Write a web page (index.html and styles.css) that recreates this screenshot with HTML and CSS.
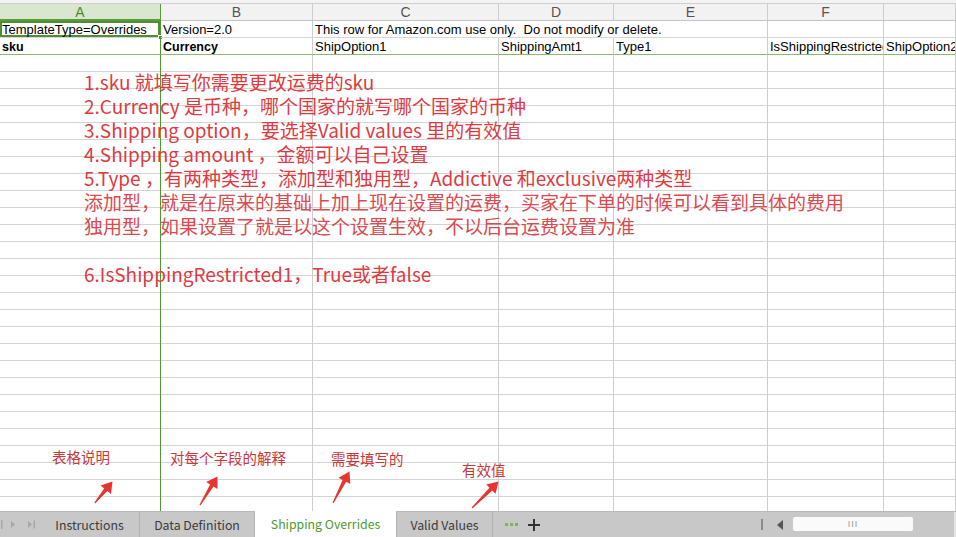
FILE: index.html
```html
<!DOCTYPE html>
<html lang="zh-CN">
<head>
<meta charset="utf-8">
<title>Shipping Overrides</title>
<link rel="stylesheet" href="styles.css">
</head>
<body>
<div class="app">
  <div class="topstrip"></div>
  <div class="sheet">
    <div class="grid">
      <div class="hd hd-sel">A</div>
      <div class="hd">B</div>
      <div class="hd">C</div>
      <div class="hd">D</div>
      <div class="hd">E</div>
      <div class="hd">F</div>
      <div class="hd"></div>

      <div class="c colA selcell">TemplateType=Overrides<span class="handle"></span></div>
      <div class="c">Version=2.0</div>
      <div class="c nob">This row for Amazon.com use only.&nbsp; Do not modify or delete.</div>
      <div class="c nob"></div>
      <div class="c"></div>
      <div class="c"></div>
      <div class="c"></div>

      <div class="c colA r2 b">sku</div>
      <div class="c r2 b">Currency</div>
      <div class="c r2">ShipOption1</div>
      <div class="c r2">ShippingAmt1</div>
      <div class="c r2">Type1</div>
      <div class="c r2 clip">IsShippingRestricted1</div>
      <div class="c r2 clip">ShipOption2</div>

      <div class="rest colA"></div>
      <div class="rest"></div>
      <div class="rest"></div>
      <div class="rest"></div>
      <div class="rest"></div>
      <div class="rest"></div>
      <div class="rest"></div>
    </div>
  </div>

  <div class="notes">
    <div>1.sku 就填写你需要更改运费的sku</div>
    <div>2.Currency 是币种，哪个国家的就写哪个国家的币种</div>
    <div>3.Shipping option，要选择Valid values 里的有效值</div>
    <div>4.Shipping amount ，金额可以自己设置</div>
    <div>5.Type ，有两种类型，添加型和独用型，Addictive 和exclusive两种类型</div>
    <div class="thin">添加型，就是在原来的基础上加上现在设置的运费，买家在下单的时候可以看到具体的费用</div>
    <div class="thin">独用型，如果设置了就是以这个设置生效，不以后台运费设置为准</div>
    <div class="blank"></div>
    <div>6.IsShippingRestricted1，True或者false</div>
  </div>

  <div class="label l1">表格说明</div>
  <div class="label l2">对每个字段的解释</div>
  <div class="label l3">需要填写的</div>
  <div class="label l4">有效值</div>

  <svg class="arrows" width="956" height="537" viewBox="0 0 956 537">
    <g fill="#e8342e">
      <polygon points="95.2,503.5 107.3,491.0 111.0,494.0 112.5,481.5 100.6,485.5 104.2,488.5 94.4,502.6"/>
      <polygon points="200.4,505.4 213.5,486.6 217.5,489.0 217.5,476.5 206.2,482.0 210.1,484.5 199.5,504.7"/>
      <polygon points="333.5,503.3 346.2,481.8 350.3,484.0 349.5,471.5 338.6,477.8 342.6,480.0 332.5,502.7"/>
      <polygon points="472.4,508.4 492.3,490.5 495.6,493.8 498.5,481.5 486.2,484.4 489.5,487.7 471.6,507.6"/>
    </g>
  </svg>

  <div class="tabbar">
    <div class="nav">
      <svg width="40" height="26" viewBox="0 0 40 26">
        <g fill="#a8a8a8">
          <rect x="1" y="8" width="1.5" height="9"/>
          <polygon points="11,9 15,12.5 11,16"/>
          <polygon points="28,9 32,12.5 28,16"/>
          <rect x="33.5" y="8.5" width="1.5" height="8"/>
        </g>
      </svg>
    </div>
    <div class="tab w1">Instructions</div>
    <div class="tab w2">Data Definition</div>
    <div class="tab w3 active">Shipping Overrides</div>
    <div class="tab w4">Valid Values</div>
    <div class="dots"><span></span><span></span><span></span></div>
    <div class="plus">
      <svg width="12" height="12" viewBox="0 0 12 12"><rect x="5" y="0" width="2" height="12" fill="#333"/><rect x="0" y="5" width="12" height="2" fill="#333"/></svg>
    </div>
    <div class="spacer"></div>
    <div class="vsep"></div>
    <div class="leftarrow">
      <svg width="6" height="10" viewBox="0 0 6 10"><polygon points="6,0 0,5 6,10" fill="#555"/></svg>
    </div>
    <div class="thumb"><span class="grip">III</span></div>
    <div class="endpad"></div>
  </div>
</div>
</body>
</html>
```

FILE: styles.css
```css
* { box-sizing: border-box; }
html, body { margin: 0; padding: 0; }
body {
  width: 956px;
  height: 537px;
  overflow: hidden;
  background: #fff;
  font-family: "Liberation Sans", Arial, sans-serif;
}
.app {
  position: relative;
  width: 956px;
  height: 537px;
  display: flex;
  flex-direction: column;
  overflow: hidden;
}
.topstrip {
  height: 4px;
  background: #f4f4f4;
  border-bottom: 1px solid #cfcfcf;
}
.sheet {
  flex: 1;
  overflow: hidden;
}
.grid {
  display: grid;
  grid-template-columns: 161px 152px 186px 115px 154px 116px 1fr;
  grid-template-rows: 17px 17px 17px 470px;
  height: 100%;
}
.hd {
  background: #f2f2f2;
  border-right: 1px solid #cdcdcd;
  border-bottom: 1px solid #c4c4c4;
  color: #555;
  font-size: 14px;
  line-height: 17px;
  text-align: center;
}
.hd-sel {
  background: #d9e6d0;
  color: #4a8a2c;
  border-bottom: 2px solid #5a9a3a;
  border-right: 1px solid #5a9a3a;
}
.c {
  position: relative;
  border-right: 1px solid #cdcdcd;
  border-bottom: 1px solid #d6d6d6;
  font-size: 13px;
  line-height: 16px;
  padding: 1px 0 0 2px;
  white-space: nowrap;
  color: #000;
}
.c.nob { border-right-color: transparent; }
.c.clip { overflow: hidden; }
.c.r2 { border-bottom: 1px solid #8db874; }
.c.b { font-weight: bold; font-size: 12.5px; }
.colA { border-right: 1px solid #4f9a30 !important; }
.selcell {
  box-shadow: inset 0 0 0 2px #4f8f32;
}
.handle {
  position: absolute;
  right: -3px;
  bottom: -3px;
  width: 5px;
  height: 5px;
  background: #4f8f32;
  border: 1px solid #fff;
}
.rest {
  border-right: 1px solid #cdcdcd;
  background: repeating-linear-gradient(to bottom, transparent 0, transparent 16px, #d3d3d3 16px, #d3d3d3 17px);
}

.notes {
  position: absolute;
  left: 84px;
  top: 70px;
  font-family: "Noto Sans CJK SC", "Noto Sans", sans-serif;
  font-size: 19px;
  line-height: 24px;
  color: #dd3b42;
  white-space: nowrap;
}
.notes .thin { color: #db4a50; }
.notes .blank { height: 24px; }

.label {
  position: absolute;
  font-family: "Noto Sans CJK SC", sans-serif;
  font-size: 14.5px;
  line-height: 18px;
  color: #c9373b;
  white-space: nowrap;
}
.l1 { left: 52px; top: 448px; }
.l2 { left: 170px; top: 449px; }
.l3 { left: 331px; top: 450px; }
.l4 { left: 462px; top: 461px; }

.arrows {
  position: absolute;
  left: 0;
  top: 0;
  pointer-events: none;
}

.tabbar {
  height: 26px;
  flex: none;
  background: #c8c8c8;
  border-top: 1px solid #b8b8b8;
  display: flex;
  align-items: stretch;
  font-family: "Noto Sans CJK SC", "Noto Sans", sans-serif;
  font-size: 12.3px;
  color: #3a3a3a;
}
.nav { width: 40px; display: flex; align-items: center; }
.nav svg { display: block; }
.tab {
  display: flex;
  align-items: center;
  justify-content: center;
  border-right: 1px solid #b3b3b3;
}
.w1 { width: 100px; }
.w2 { width: 115px; }
.w3 { width: 142px; }
.w4 { width: 96px; }
.tab.active {
  background: #fff;
  color: #4e9a2c;
  margin-top: -1px;
}
.dots {
  margin-left: 12px;
  display: flex;
  align-items: center;
  gap: 2px;
}
.dots span {
  width: 3px;
  height: 3px;
  background: #7db35c;
}
.plus {
  margin-left: 10px;
  display: flex;
  align-items: center;
}
.plus svg { display: block; }
.spacer { flex: 1; }
.vsep {
  width: 2px;
  margin: 7px 0;
  background: #8a8a8a;
}
.leftarrow {
  margin-left: 14px;
  display: flex;
  align-items: center;
}
.leftarrow svg { display: block; }
.thumb {
  margin: 5px 0 6px 10px;
  width: 120px;
  background: #fafafa;
  border-radius: 2px;
  display: flex;
  align-items: center;
  justify-content: center;
}
.grip {
  font-family: "Liberation Sans", sans-serif;
  font-size: 9px;
  color: #999;
  letter-spacing: 1px;
}
.endpad {
  width: 43px;
  border-right: 2px solid #e6e6e6;
}
```
